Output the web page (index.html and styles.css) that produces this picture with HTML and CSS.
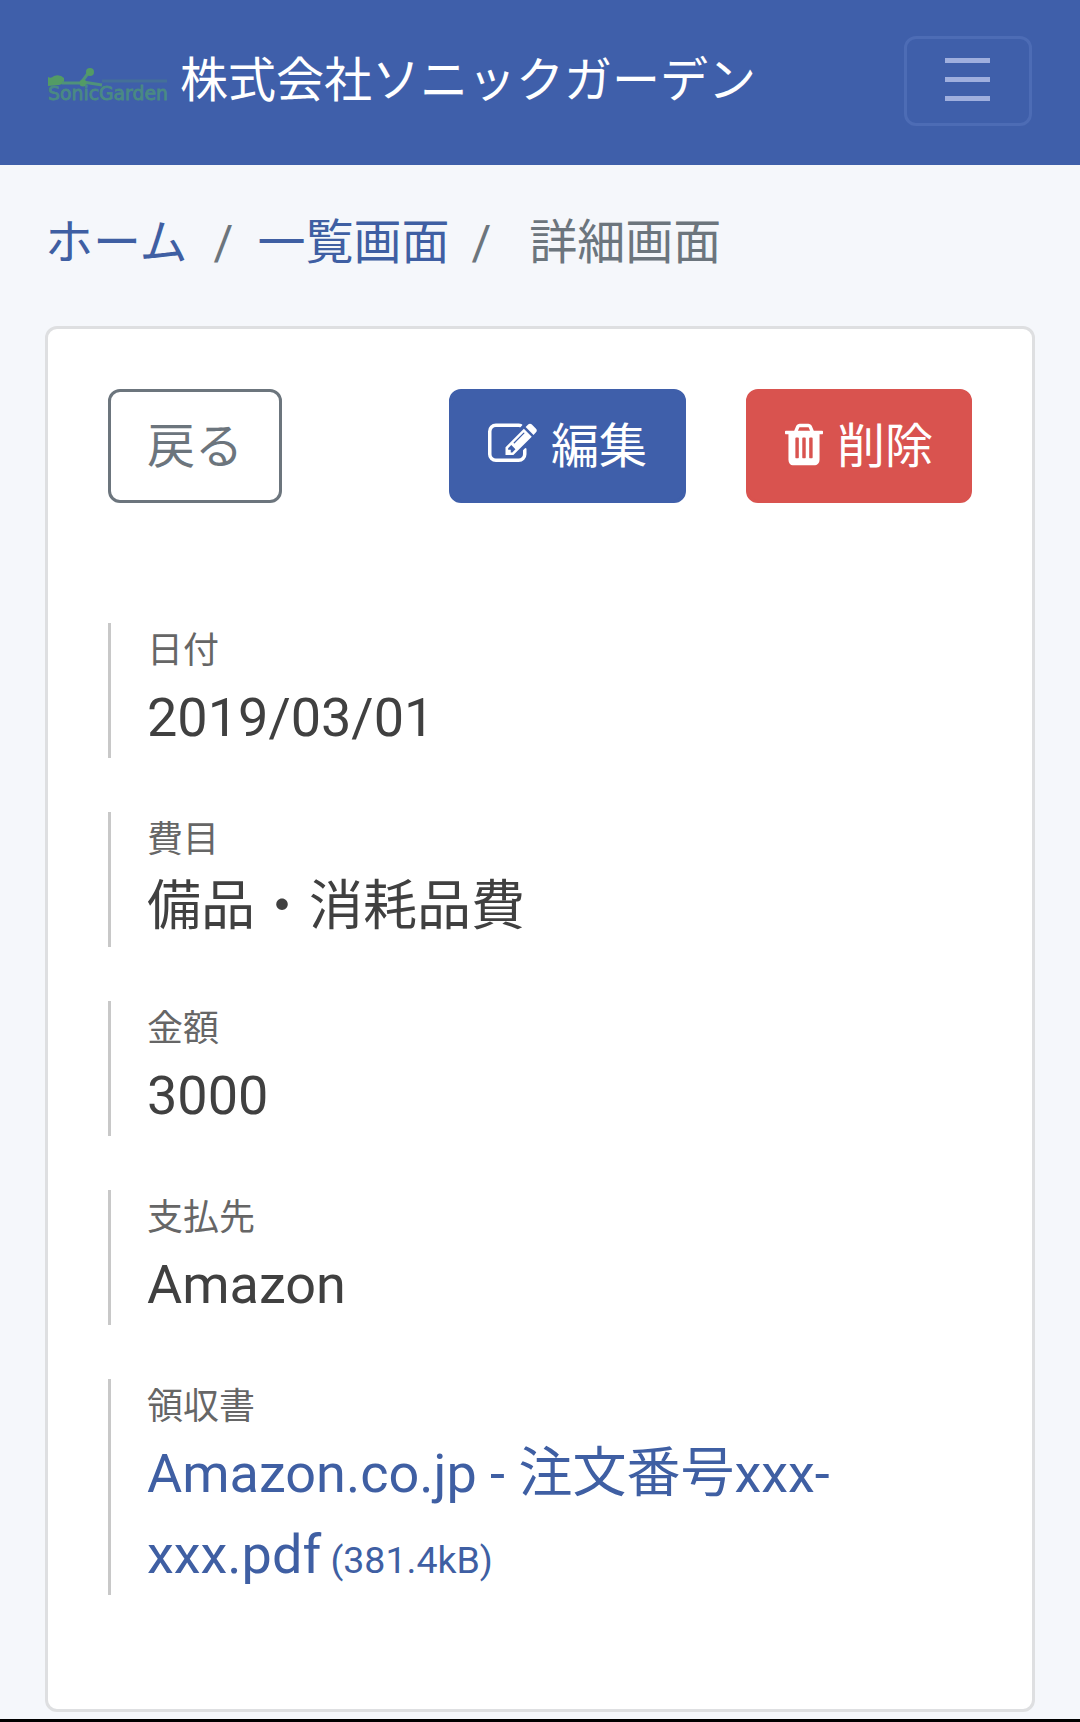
FILE: index.html
```html
<!DOCTYPE html>
<html lang="ja">

<head>
  <meta charset="utf-8">
  <meta name="viewport" content="width=device-width, initial-scale=1.0">
  <title>詳細画面</title>
  <link rel="stylesheet" href="styles.css">
</head>

<body>
  <nav class="navbar">
    <a class="navbar-brand" href="#">
      <svg class="logo" viewBox="0 0 120 36" role="img" aria-label="SonicGarden">
        <path d="M0 10 Q3 12 6 9 Q12 7 16 11 Q17 17 11 18 L0 19 Z" class="leaf" />
        <path d="M14 16 H33 L41 5 M35 15 L54 18" class="stem" />
        <circle cx="42" cy="5" r="4" class="bud" />
        <circle cx="35" cy="16" r="3.5" class="bud" />
        <path d="M54 14 H119" class="tagline" />
        <text x="0" y="33" textLength="120" lengthAdjust="spacingAndGlyphs">SonicGarden</text>
      </svg>
      <span>株式会社ソニックガーデン</span>
    </a>
    <button class="navbar-toggler" type="button" aria-label="menu">
      <span class="bar"></span>
      <span class="bar"></span>
      <span class="bar"></span>
    </button>
  </nav>

  <ol class="breadcrumb">
    <li><a href="#">ホーム</a></li>
    <li><a href="#">一覧画面</a></li>
    <li class="active">詳細画面</li>
  </ol>

  <div class="card">
    <div class="buttons">
      <a class="btn btn-back" href="#">戻る</a>
      <a class="btn btn-edit" href="#">
        <svg class="icon icon-edit" viewBox="0 0 1792 1792"><path d="M888 1184l116-116-152-152-116 116v56h96v96h56zm440-720q-16-16-33 1l-350 350q-17 17-1 33t33-1l350-350q17-17 1-33zm80 594v190q0 119-84.5 203.5t-203.5 84.5h-832q-119 0-203.5-84.5t-84.5-203.5v-832q0-119 84.5-203.5t203.5-84.5h832q63 0 117 25 15 7 18 23 3 17-9 29l-49 49q-14 14-32 8-23-6-45-6h-832q-66 0-113 47t-47 113v832q0 66 47 113t113 47h832q66 0 113-47t47-113v-126q0-13 9-22l64-64q15-15 35-7t20 29zm-96-738l288 288-672 672h-288v-288zm444 132l-92 92-288-288 92-92q28-28 68-28t68 28l152 152q28 28 28 68t-28 68z" /></svg>
        編集
      </a>
      <a class="btn btn-delete" href="#">
        <svg class="icon icon-trash" viewBox="192 0 1408 1792"><path d="M704 1376v-704q0-14-9-23t-23-9h-64q-14 0-23 9t-9 23v704q0 14 9 23t23 9h64q14 0 23-9t9-23zm256 0v-704q0-14-9-23t-23-9h-64q-14 0-23 9t-9 23v704q0 14 9 23t23 9h64q14 0 23-9t9-23zm256 0v-704q0-14-9-23t-23-9h-64q-14 0-23 9t-9 23v704q0 14 9 23t23 9h64q14 0 23-9t9-23zm-544-992h448l-48-117q-7-9-17-11h-317q-10 2-17 11zm928 32v64q0 14-9 23t-23 9h-96v948q0 83-47 143.5t-113 60.5h-832q-66 0-113-58.5t-47-141.5v-952h-96q-14 0-23-9t-9-23v-64q0-14 9-23t23-9h309l70-167q15-37 54-63t79-26h320q40 0 79 26t54 63l70 167h309q14 0 23 9t9 23z" /></svg>
        削除
      </a>
    </div>

    <dl class="detail">
      <div class="item">
        <dt>日付</dt>
        <dd>2019/03/01</dd>
      </div>
      <div class="item">
        <dt>費目</dt>
        <dd>備品・消耗品費</dd>
      </div>
      <div class="item">
        <dt>金額</dt>
        <dd>3000</dd>
      </div>
      <div class="item">
        <dt>支払先</dt>
        <dd>Amazon</dd>
      </div>
      <div class="item">
        <dt>領収書</dt>
        <dd><a href="#">Amazon.co.jp - 注文番号xxx-<br>xxx.pdf<small> (381.4kB)</small></a></dd>
      </div>
    </dl>
  </div>
  <div class="bottom-line"></div>
</body>

</html>
```

FILE: styles.css
```css
* {
  box-sizing: border-box;
}

body {
  margin: 0;
  min-height: 1722px;
  display: flex;
  flex-direction: column;
  background-color: #f5f7fb;
  color: #404040;
  font-family: Roboto, "Noto Sans CJK JP", sans-serif;
  font-size: 48px;
  line-height: 72px;
}

a {
  color: #3f5fa3;
  text-decoration: none;
}

.navbar {
  display: flex;
  justify-content: space-between;
  align-items: flex-start;
  height: 165px;
  padding: 36px 48px;
  background-color: #3f5faa;
}

.navbar-brand {
  display: flex;
  gap: 12px;
  padding-top: 9px;
  color: #fff;
}

.logo {
  width: 120px;
  height: 36px;
  margin-top: 22px;
  overflow: visible;
}

.logo text {
  fill: #4a8a83;
  stroke: #4a8a83;
  stroke-width: 0.8;
  font-family: "DejaVu Sans", sans-serif;
  font-size: 19px;
}

.logo .leaf,
.logo .bud {
  fill: #539b65;
}

.logo .stem {
  fill: none;
  stroke: #4f927a;
  stroke-width: 3;
}

.logo .tagline {
  stroke: #447098;
  stroke-width: 3;
}

.navbar-toggler {
  display: flex;
  flex-direction: column;
  align-items: center;
  gap: 14px;
  width: 128px;
  height: 90px;
  padding: 19px 2px 0 0;
  background: none;
  border: 3px solid #4d6cb5;
  border-radius: 12px;
}

.bar {
  width: 45px;
  height: 5px;
  background-color: #9fafde;
}

.breadcrumb {
  display: flex;
  margin: 0;
  padding: 42px 45px 47px;
  list-style: none;
}

.breadcrumb li + li::before {
  content: "/";
  padding: 0 24px 0 26px;
  color: #6c757d;
}

.breadcrumb li.active {
  color: #6c757d;
}

.breadcrumb li.active::before {
  padding: 0 38px 0 22px;
}

.card {
  margin: 0 45px;
  padding: 60px;
  height: 1386px;
  background-color: #fff;
  border: 3px solid #dedfe1;
  border-radius: 12px;
}

.buttons {
  display: flex;
  gap: 60px;
}

.btn {
  display: flex;
  align-items: center;
  height: 114px;
  padding: 1px 36px 0;
  border: 3px solid;
  border-radius: 12px;
}

.btn-back {
  margin-right: auto;
  color: #6c757d;
  border-color: #6c757d;
}

.btn-edit {
  color: #fff;
  background-color: #3f5faa;
  border-color: #3f5faa;
}

.btn-delete {
  color: #fff;
  background-color: #d9534f;
  border-color: #d9534f;
}

.icon {
  height: 49px;
  margin: 0 14px 4px 0;
  fill: currentColor;
}

.icon-edit {
  width: 49px;
}

.icon-trash {
  width: 38px;
}

.detail {
  display: flex;
  flex-direction: column;
  gap: 54px;
  margin: 120px 0 0;
}

.item {
  padding-left: 36px;
  border-left: 3px solid #c8c8c8;
}

.item dt {
  height: 54px;
  padding-top: 1px;
  color: #666;
  font-size: 36px;
  line-height: 54px;
}

.item dd {
  margin: 0;
  font-size: 54px;
  line-height: 81px;
}

.item small {
  font-size: 37.5px;
  line-height: 1;
}

.bottom-line {
  height: 3px;
  margin-top: auto;
  background-color: #000;
}
```
